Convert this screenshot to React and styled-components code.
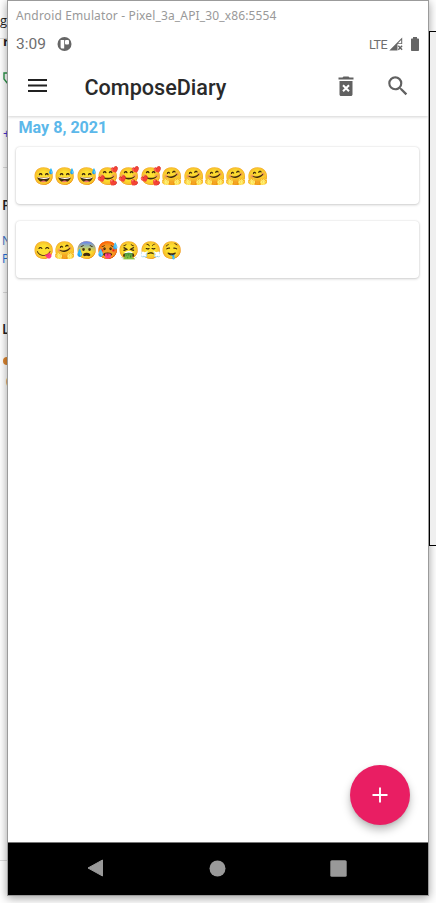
import React from 'react';
import styled, { createGlobalStyle } from 'styled-components';

const Global = createGlobalStyle`
  * { box-sizing: border-box; }
  body { margin: 0; background: #fff; font-family: Roboto, sans-serif; overflow: hidden; }
`;
const Desktop = styled.div`
  display: grid;
  grid-template: 903px / 436px;
  overflow: hidden;
`;
const Backdrop = styled.div`
  grid-area: 1 / 1;
  display: flex;
  justify-content: space-between;
`;
const PageEdge = styled.div`
  width: 30px;
  height: 903px;
  display: flex;
  flex-direction: column;
  overflow: hidden;
  font-family: 'Open Sans', sans-serif;
`;
const Line = styled.div`
  height: ${(p) => p.$h || 18}px;
  line-height: ${(p) => p.$h || 18}px;
  flex-shrink: 0;
  margin-top: ${(p) => p.$top || 0}px;
  padding-left: ${(p) => p.$x ?? 2}px;
  font-size: ${(p) => p.$size || 13}px;
  font-weight: ${(p) => p.$weight || 400};
  color: ${(p) => p.$color || '#222'};
`;
const Rule = styled.div`
  height: 1px;
  flex-shrink: 0;
  margin-top: ${(p) => p.$top || 0}px;
  margin-left: ${(p) => p.$x || 0}px;
  background: #dcdcdc;
`;
const Dot = styled.div`
  width: 8px;
  height: 8px;
  margin: 19px 0 12px 3px;
  flex-shrink: 0;
  border-radius: 50%;
  background: #dc8630;
`;
const SidePanel = styled.div`
  width: 7px;
  height: 515px;
  margin-top: 31px;
  border: 1px solid #000;
  border-right: 0;
  background: #efefef;
`;
const Window = styled.main`
  grid-area: 1 / 1;
  z-index: 1;
  width: 422px;
  height: 896px;
  margin-left: 7px;
  display: flex;
  flex-direction: column;
  border: 1px solid #9b9b9b;
  background: #fff;
  box-shadow: 0 2px 9px rgba(0, 0, 0, 0.38);
  clip-path: polygon(-20px -5px, 440px -5px, 440px 31px, 422px 31px, 422px 546px, 440px 546px, 440px 920px, -20px 920px);
`;
const TitleBar = styled.div`
  height: 29px;
  padding-left: 8px;
  font: 12px/29px 'Noto Sans', sans-serif;
  letter-spacing: 0.14px;
  color: #999;
`;
const StatusBar = styled.div`
  height: 28px;
  display: flex;
  align-items: center;
  padding: 0 8px;
  color: #6e6e6e;
  font-size: 15.5px;
  svg { display: block; }
`;
const Clock = styled.span`
  width: 41px;
`;
const Network = styled.span`
  margin-left: auto;
  margin-right: 2px;
  font-size: 12.5px;
  letter-spacing: -0.5px;
`;
const Battery = styled.svg`
  margin-left: 7px;
`;
const AppBar = styled.header`
  height: 58px;
  display: flex;
  align-items: center;
  padding: 0 20px 2px;
  flex-shrink: 0;
  box-shadow: 0 1px 3px rgba(0, 0, 0, 0.18);
  clip-path: inset(0 0 -5px 0);
  svg { display: block; }
`;
const AppTitle = styled.h1`
  flex: 1;
  margin: 4px 0 0 37.5px;
  font-size: 21.6px;
  font-weight: 500;
  line-height: 26px;
  color: #2a2a2a;
`;
const TrashIcon = styled.svg`
  margin-right: 27px;
`;
const SearchIcon = styled.svg`
  margin-right: -3px;
`;
const Diary = styled.section`
  flex: 1;
  padding: 2px 8px 0;
`;
const DateLabel = styled.h2`
  margin: 0 0 9px 2.5px;
  font-size: 16.1px;
  font-weight: 700;
  line-height: 20px;
  color: #5cb8ea;
`;
const Entry = styled.article`
  width: 403px;
  height: 57px;
  margin-bottom: 17px;
  padding-left: 17.5px;
  border-radius: 4px;
  background: #fff;
  box-shadow: 0 1px 3px rgba(0, 0, 0, 0.18), 0 0 2px rgba(0, 0, 0, 0.12);
  font: 17.15px/59px 'Noto Color Emoji', Roboto, sans-serif;
  white-space: nowrap;
`;
const Fab = styled.button`
  align-self: flex-end;
  width: 60px;
  height: 60px;
  margin: 0 18px 17px 0;
  padding: 0;
  display: grid;
  place-items: center;
  flex-shrink: 0;
  border: 0;
  border-radius: 50%;
  background: #e91e63;
  box-shadow: 0 5px 9px rgba(0, 0, 0, 0.26), 0 1px 3px rgba(0, 0, 0, 0.08);
`;
const NavBar = styled.nav`
  height: 53px;
  flex-shrink: 0;
  display: flex;
  align-items: center;
  justify-content: space-between;
  padding: 0 81px 2px 78px;
  border-top: 1px solid #777;
  background: #000;
`;

export default function App() {
  return (
    <>
      <Global />
      <Desktop>
        <Backdrop>
          <PageEdge>
            <Line $top={3} $h={35} $x={0}>g</Line>
            <Rule />
            <Line $h={5} $x={3} $weight={700}>r</Line>
            <Line $top={3} $h={60} $x={3}>
              <svg width="14" height="60" viewBox="0 0 14 60">
                <path d="M1 26h9v7l-5 4-4-5z" fill="none" stroke="#2b9348" strokeWidth="1.4" />
              </svg>
            </Line>
            <Line $top={18} $x={3} $size={12} $color="#4933d1">+</Line>
            <Rule $top={24} $x={3} />
            <Line $top={28} $size={14} $weight={600}>P</Line>
            <Line $top={18} $size={12} $color="#3a6fc4">N</Line>
            <Line $size={12} $color="#2670d8">P</Line>
            <Rule $top={24} $x={3} />
            <Line $top={27} $size={14} $weight={600}>L</Line>
            <Dot />
            <Line $h={8} $x={6} $size={10} $color="#b97b50">(</Line>
            <Rule $top={475} />
          </PageEdge>
          <SidePanel />
        </Backdrop>
        <Window>
          <TitleBar>Android Emulator - Pixel_3a_API_30_x86:5554</TitleBar>
          <StatusBar>
            <Clock>3:09</Clock>
            <svg width="15" height="15" viewBox="0 0 15 15">
              <circle cx="7.5" cy="7" r="7" fill="#666" />
              <path d="M3.600 3h3.600v8.600H5.300C4.400 11.600 3.600 11 3.600 10z" fill="#fff" />
              <rect x="8" y="3" width="4" height="4.600" rx="1" fill="#fff" />
            </svg>
            <Network>LTE</Network>
            <svg width="14" height="14" viewBox="0 0 14 14">
              <path d="M13.200.5V7H8.500v6.500H.3zM12.200 3L9 6.200h3.200z" fill="#666" fillRule="evenodd" />
              <path d="M9.300 8.800l3.800 4M13.100 8.800l-3.800 4" stroke="#666" strokeWidth="1.400" />
            </svg>
            <Battery width="10" height="14" viewBox="0 0 10 14">
              <path d="M3 0h4v1.500h1c.6 0 1 .4 1 1V13c0 .6-.4 1-1 1H2c-.6 0-1-.4-1-1V2.500c0-.6.4-1 1-1h1z" fill="#666" />
            </Battery>
          </StatusBar>
          <AppBar>
            <svg width="19" height="14" viewBox="0 0 19 14">
              <path d="M0 1h19M0 6.500h19M0 12h19" stroke="#212121" strokeWidth="1.800" />
            </svg>
            <AppTitle>ComposeDiary</AppTitle>
            <TrashIcon width="24" height="24" viewBox="0 0 24 24">
              <path d="M5.500 7h13v13.500c0 .9-.8 1.500-1.500 1.500H7c-.8 0-1.500-.6-1.500-1.500zM4.500 3.500h4l1-1h5l1 1h4v2h-15z" fill="#616161" />
              <path d="M9 11.300l6 6M15 11.300l-6 6" stroke="#fff" strokeWidth="2" />
            </TrashIcon>
            <SearchIcon width="26" height="26" viewBox="0 0 24 24" fill="#616161">
              <path d="M15.500 14h-.79l-.28-.27A6.471 6.471 0 0 0 16 9.500 6.500 6.500 0 1 0 9.500 16c1.610 0 3.090-.59 4.230-1.570l.27.28v.79l5 4.990L20.490 19l-4.990-5zm-6 0C7.010 14 5 11.990 5 9.500S7.010 5 9.500 5 14 7.010 14 9.500 11.990 14 9.500 14z" />
            </SearchIcon>
          </AppBar>
          <Diary>
            <DateLabel>May 8, 2021</DateLabel>
            <Entry>😅😅😅🥰🥰🥰🤗🤗🤗🤗🤗</Entry>
            <Entry>😋🤗😰🥵🤮😤🤤</Entry>
          </Diary>
          <Fab aria-label="Add entry">
            <svg width="16" height="16" viewBox="0 0 16 16">
              <path d="M8 .5v15M.5 8h15" stroke="#fff" strokeWidth="1.900" />
            </svg>
          </Fab>
          <NavBar>
            <svg width="18" height="18" viewBox="0 0 18 18">
              <path d="M2 9L16.500 1v16z" fill="#999" stroke="#999" strokeLinejoin="round" />
            </svg>
            <svg width="17" height="17" viewBox="0 0 17 17">
              <circle cx="8.500" cy="8.500" r="8" fill="#999" />
            </svg>
            <svg width="17" height="17" viewBox="0 0 17 17">
              <rect x=".3" y=".3" width="16.400" height="16.400" rx="1.500" fill="#999" />
            </svg>
          </NavBar>
        </Window>
      </Desktop>
    </>
  );
}
